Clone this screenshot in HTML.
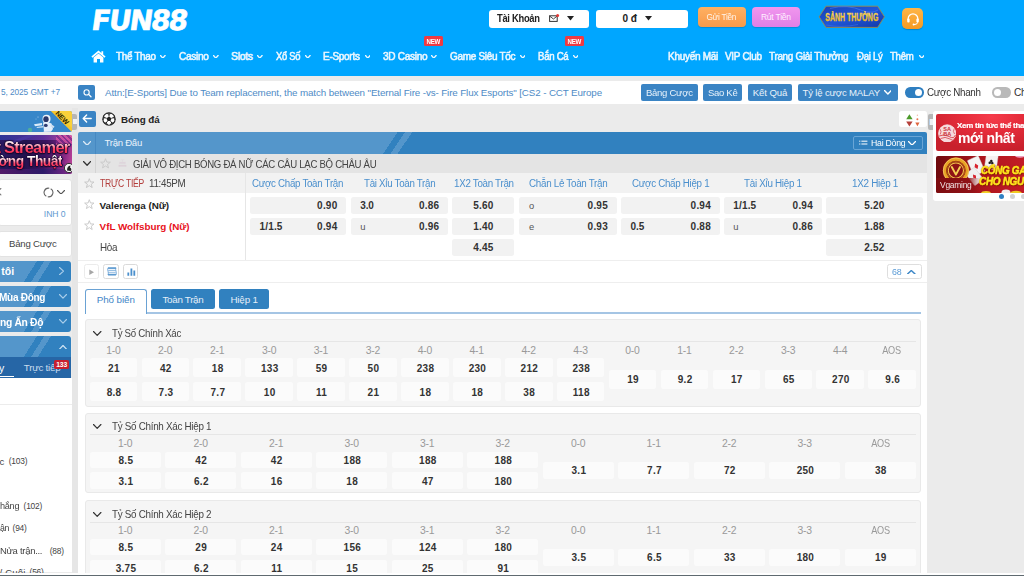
<!DOCTYPE html>
<html lang="vi">
<head>
<meta charset="utf-8">
<title>FUN88 - Bóng đá</title>
<style>
html,body{margin:0;padding:0;}
body{width:1024px;height:576px;overflow:hidden;background:#ebebeb;font-family:"Liberation Sans",sans-serif;position:relative;}
#root{position:absolute;left:0;top:0;width:1024px;height:576px;overflow:hidden;}
#root div,#root span,#root svg{position:absolute;box-sizing:border-box;}
#root span{white-space:nowrap;}
</style>
</head>
<body>
<div id="root">
<div style="left:0.00px;top:0.00px;width:1024.00px;height:76.30px;background:#00a6ff;"></div>
<span style="left:88.60px;top:1.50px;font-size:27.8px;line-height:38px;color:#fff;font-weight:700;font-family:'DejaVu Sans', 'Liberation Sans', sans-serif;letter-spacing:-1.75px;-webkit-text-stroke:0.6px #fff;transform:skewX(-8deg);transform-origin:left bottom;">FUN88</span>
<div style="left:489.00px;top:9.50px;width:100.00px;height:18.00px;background:#fff;border-radius:3px;"></div>
<span style="left:497.00px;top:11.00px;font-size:10px;line-height:15px;color:#222;font-weight:700;letter-spacing:-0.300px;transform:scaleX(0.9359);transform-origin:left center;">Tài Khoản</span>
<div style="left:596.00px;top:9.50px;width:91.50px;height:18.00px;background:#fff;border-radius:3px;"></div>
<span style="left:622.50px;top:11.00px;font-size:10px;line-height:15px;color:#222;font-weight:700;letter-spacing:0.016px;">0 đ</span>
<svg style="left:548.50px;top:14.00px;" width="11" height="9" viewBox="0 0 11 9"><rect x="0.6" y="1.8" width="7.6" height="5.6" fill="none" stroke="#333" stroke-width="1"/><path d="M0.8 2.2 L4.4 5 L8 2.2" fill="none" stroke="#333" stroke-width="0.9"/><circle cx="8.6" cy="1.6" r="1.5" fill="#e53935"/></svg>
<svg style="left:567.00px;top:16.20px;" width="7" height="5" viewBox="0 0 7 5"><path d="M0 0 H7 L3.5 4.6 Z" fill="#222"/></svg>
<svg style="left:644.50px;top:16.20px;" width="7" height="5" viewBox="0 0 7 5"><path d="M0 0 H7 L3.5 4.6 Z" fill="#222"/></svg>
<div style="left:697.50px;top:7.00px;width:48.00px;height:20.00px;background:linear-gradient(180deg,#ffb062,#f79a4a);border-radius:4px;box-shadow:0 1px 1px rgba(0,0,0,.15);"></div>
<span style="left:706.08px;top:10.70px;font-size:8.5px;line-height:13px;color:#fff4ea;letter-spacing:-0.255px;transform:scaleX(0.9728);transform-origin:15.42px center;">Gửi Tiền</span>
<div style="left:752.00px;top:7.00px;width:48.00px;height:20.00px;background:linear-gradient(180deg,#f196ee,#e07fe6);border-radius:4px;box-shadow:0 1px 1px rgba(0,0,0,.15);"></div>
<span style="left:760.90px;top:10.70px;font-size:8.5px;line-height:13px;color:#fff0ff;letter-spacing:-0.207px;">Rút Tiền</span>
<svg style="left:818.40px;top:5.00px;" width="68" height="24" viewBox="0 0 68 24"><defs><linearGradient id="gd" x1="0" y1="0" x2="0" y2="1"><stop offset="0" stop-color="#fff0a0"/><stop offset="0.5" stop-color="#f6c935"/><stop offset="1" stop-color="#e0a21c"/></linearGradient><linearGradient id="bd" x1="0" y1="0" x2="1" y2="1"><stop offset="0" stop-color="#1a3fb4"/><stop offset="0.5" stop-color="#1f56d8"/><stop offset="1" stop-color="#1238a6"/></linearGradient></defs><path d="M1.2 11.8 L8 1.2 H59.6 L66.4 11.8 L59.6 22.4 H8 Z" fill="url(#bd)" stroke="#9a8a4a" stroke-width="0.9"/><path d="M12 3.4 Q30 -1 44 5.5 Q54 9 60 5" fill="none" stroke="#3f7af0" stroke-width="1" opacity=".7"/><path d="M8 20 Q24 23 40 19.5" fill="none" stroke="#3f7af0" stroke-width="0.8" opacity=".6"/><text x="33.8" y="16.3" text-anchor="middle" font-family="Liberation Sans, sans-serif" font-weight="700" font-size="11.6" fill="url(#gd)" stroke="#f2c230" stroke-width="0.35" textLength="53" lengthAdjust="spacingAndGlyphs">SẢNH THƯỞNG</text></svg>
<div style="left:901.50px;top:7.50px;width:21.50px;height:21.50px;background:linear-gradient(180deg,#ffb648,#f59a23);border-radius:5px;box-shadow:0 1px 1px rgba(0,0,0,.2);"></div>
<svg style="left:904.50px;top:10.50px;" width="16" height="16" viewBox="0 0 16 16"><path d="M3.2 9 V7.6 A4.8 4.8 0 0 1 12.8 7.6 V9" fill="none" stroke="#fff" stroke-width="1.3"/><rect x="2.2" y="7.6" width="2.4" height="4" rx="1" fill="#fff"/><rect x="11.4" y="7.6" width="2.4" height="4" rx="1" fill="#fff"/><path d="M12.6 11.4 Q12.4 13.6 9 13.6" fill="none" stroke="#fff" stroke-width="1"/><circle cx="8.6" cy="13.6" r="1" fill="#fff"/></svg>
<svg style="left:91.00px;top:49.50px;" width="15" height="13" viewBox="0 0 15 13"><path d="M7.5 0.6 L0.4 6.6 L1.5 7.8 L7.5 2.8 L13.5 7.8 L14.6 6.6 L12.2 4.5 V1.2 H10.4 V3 Z" fill="#fff"/><path d="M2.6 7.6 L7.5 3.6 L12.4 7.6 V12.4 H9 V9 H6 V12.4 H2.6 Z" fill="#fff"/></svg>
<span style="left:115.75px;top:48.80px;font-size:10.3px;line-height:15px;color:#eaf6ff;letter-spacing:-0.309px;transform:scaleX(0.9586);transform-origin:left center;-webkit-text-stroke:0.55px #eaf6ff;">Thể Thao</span>
<svg style="left:160.30px;top:54.90px;" width="5.6" height="3.6" viewBox="0 0 5.6 3.6"><path d="M0.5 0.5 L2.8 3.1 L5.1 0.5" fill="none" stroke="#eaf6ff" stroke-width="1.4" stroke-linecap="round" stroke-linejoin="round"/></svg>
<span style="left:178.50px;top:48.80px;font-size:10.3px;line-height:15px;color:#eaf6ff;letter-spacing:-0.309px;transform:scaleX(0.9830);transform-origin:left center;-webkit-text-stroke:0.55px #eaf6ff;">Casino</span>
<svg style="left:213.00px;top:54.90px;" width="5.6" height="3.6" viewBox="0 0 5.6 3.6"><path d="M0.5 0.5 L2.8 3.1 L5.1 0.5" fill="none" stroke="#eaf6ff" stroke-width="1.4" stroke-linecap="round" stroke-linejoin="round"/></svg>
<span style="left:231.00px;top:48.80px;font-size:10.3px;line-height:15px;color:#eaf6ff;letter-spacing:-0.231px;-webkit-text-stroke:0.55px #eaf6ff;">Slots</span>
<svg style="left:257.00px;top:54.90px;" width="5.6" height="3.6" viewBox="0 0 5.6 3.6"><path d="M0.5 0.5 L2.8 3.1 L5.1 0.5" fill="none" stroke="#eaf6ff" stroke-width="1.4" stroke-linecap="round" stroke-linejoin="round"/></svg>
<span style="left:275.75px;top:48.80px;font-size:10.3px;line-height:15px;color:#eaf6ff;letter-spacing:-0.309px;transform:scaleX(0.9133);transform-origin:left center;-webkit-text-stroke:0.55px #eaf6ff;">Xổ Số</span>
<svg style="left:305.00px;top:54.90px;" width="5.6" height="3.6" viewBox="0 0 5.6 3.6"><path d="M0.5 0.5 L2.8 3.1 L5.1 0.5" fill="none" stroke="#eaf6ff" stroke-width="1.4" stroke-linecap="round" stroke-linejoin="round"/></svg>
<span style="left:323.40px;top:48.80px;font-size:10.3px;line-height:15px;color:#eaf6ff;letter-spacing:-0.309px;transform:scaleX(0.9736);transform-origin:left center;-webkit-text-stroke:0.55px #eaf6ff;">E-Sports</span>
<svg style="left:364.70px;top:54.90px;" width="5.6" height="3.6" viewBox="0 0 5.6 3.6"><path d="M0.5 0.5 L2.8 3.1 L5.1 0.5" fill="none" stroke="#eaf6ff" stroke-width="1.4" stroke-linecap="round" stroke-linejoin="round"/></svg>
<span style="left:382.80px;top:48.80px;font-size:10.3px;line-height:15px;color:#eaf6ff;letter-spacing:-0.309px;transform:scaleX(0.9801);transform-origin:left center;-webkit-text-stroke:0.55px #eaf6ff;">3D Casino</span>
<svg style="left:431.00px;top:54.90px;" width="5.6" height="3.6" viewBox="0 0 5.6 3.6"><path d="M0.5 0.5 L2.8 3.1 L5.1 0.5" fill="none" stroke="#eaf6ff" stroke-width="1.4" stroke-linecap="round" stroke-linejoin="round"/></svg>
<span style="left:450.00px;top:48.80px;font-size:10.3px;line-height:15px;color:#eaf6ff;letter-spacing:-0.309px;transform:scaleX(0.9697);transform-origin:left center;-webkit-text-stroke:0.55px #eaf6ff;">Game Siêu Tốc</span>
<svg style="left:519.70px;top:54.90px;" width="5.6" height="3.6" viewBox="0 0 5.6 3.6"><path d="M0.5 0.5 L2.8 3.1 L5.1 0.5" fill="none" stroke="#eaf6ff" stroke-width="1.4" stroke-linecap="round" stroke-linejoin="round"/></svg>
<span style="left:538.00px;top:48.80px;font-size:10.3px;line-height:15px;color:#eaf6ff;letter-spacing:-0.309px;transform:scaleX(0.9371);transform-origin:left center;-webkit-text-stroke:0.55px #eaf6ff;">Bắn Cá</span>
<svg style="left:572.80px;top:54.90px;" width="5.6" height="3.6" viewBox="0 0 5.6 3.6"><path d="M0.5 0.5 L2.8 3.1 L5.1 0.5" fill="none" stroke="#eaf6ff" stroke-width="1.4" stroke-linecap="round" stroke-linejoin="round"/></svg>
<span style="left:668.00px;top:48.80px;font-size:10.3px;line-height:15px;color:#eaf6ff;letter-spacing:-0.309px;transform:scaleX(0.9737);transform-origin:left center;-webkit-text-stroke:0.55px #eaf6ff;">Khuyến Mãi</span>
<span style="left:725.00px;top:48.80px;font-size:10.3px;line-height:15px;color:#eaf6ff;letter-spacing:-0.309px;transform:scaleX(0.9663);transform-origin:left center;-webkit-text-stroke:0.55px #eaf6ff;">VIP Club</span>
<span style="left:768.75px;top:48.80px;font-size:10.3px;line-height:15px;color:#eaf6ff;letter-spacing:-0.309px;transform:scaleX(0.9632);transform-origin:left center;-webkit-text-stroke:0.55px #eaf6ff;">Trang Giải Thưởng</span>
<span style="left:856.75px;top:48.80px;font-size:10.3px;line-height:15px;color:#eaf6ff;letter-spacing:-0.309px;transform:scaleX(0.9315);transform-origin:left center;-webkit-text-stroke:0.55px #eaf6ff;">Đại Lý</span>
<span style="left:890.00px;top:48.80px;font-size:10.3px;line-height:15px;color:#eaf6ff;letter-spacing:-0.309px;transform:scaleX(0.9350);transform-origin:left center;-webkit-text-stroke:0.55px #eaf6ff;">Thêm</span>
<svg style="left:918.50px;top:54.90px;" width="5.6" height="3.6" viewBox="0 0 5.6 3.6"><path d="M0.5 0.5 L2.8 3.1 L5.1 0.5" fill="none" stroke="#eaf6ff" stroke-width="1.4" stroke-linecap="round" stroke-linejoin="round"/></svg>
<div style="left:424.00px;top:36.30px;width:19.00px;height:10.00px;background:#ef3a42;border-radius:1.5px;"></div>
<span style="left:426.11px;top:36.50px;font-size:6.5px;line-height:10px;color:#fff;font-weight:700;letter-spacing:-0.195px;transform:scaleX(0.9471);transform-origin:7.39px center;">NEW</span>
<div style="left:565.30px;top:36.30px;width:19.00px;height:10.00px;background:#ef3a42;border-radius:1.5px;"></div>
<span style="left:567.41px;top:36.50px;font-size:6.5px;line-height:10px;color:#fff;font-weight:700;letter-spacing:-0.195px;transform:scaleX(0.9471);transform-origin:7.39px center;">NEW</span>
<div style="left:0.00px;top:81.00px;width:1024.00px;height:23.00px;background:#fff;"></div>
<span style="left:1.00px;top:86.10px;font-size:8.3px;line-height:13px;color:#4e8bc6;letter-spacing:-0.075px;">5, 2025 GMT +7</span>
<div style="left:78.40px;top:85.00px;width:16.80px;height:15.20px;background:#3a84c4;border-radius:2px;"></div>
<svg style="left:81.50px;top:87.50px;" width="11" height="11" viewBox="0 0 11 11"><circle cx="4.6" cy="4.4" r="2.6" fill="none" stroke="#fff" stroke-width="1.1"/><path d="M6.6 6.4 L9 8.8" stroke="#fff" stroke-width="1.3" stroke-linecap="round"/></svg>
<span style="left:105.00px;top:84.90px;font-size:9.8px;line-height:15px;color:#4e8bc6;letter-spacing:-0.116px;">Attn:[E-Sports] Due to Team replacement, the match between &quot;Eternal Fire -vs- Fire Flux Esports&quot; [CS2 - CCT Europe</span>
<div style="left:641.00px;top:84.20px;width:56.60px;height:16.60px;background:#3a84c4;border-radius:2px;"></div>
<span style="left:645.60px;top:85.50px;font-size:9.6px;line-height:14px;color:#e8f2fb;letter-spacing:-0.288px;transform:scaleX(0.9934);transform-origin:left center;">Bảng Cược</span>
<div style="left:703.00px;top:84.20px;width:39.30px;height:16.60px;background:#3a84c4;border-radius:2px;"></div>
<span style="left:707.80px;top:85.50px;font-size:9.6px;line-height:14px;color:#e8f2fb;letter-spacing:-0.288px;transform:scaleX(0.9885);transform-origin:left center;">Sao Kê</span>
<div style="left:748.00px;top:84.20px;width:44.00px;height:16.60px;background:#3a84c4;border-radius:2px;"></div>
<span style="left:752.80px;top:85.50px;font-size:9.6px;line-height:14px;color:#e8f2fb;letter-spacing:-0.115px;">Kết Quả</span>
<div style="left:797.60px;top:84.20px;width:100.00px;height:16.60px;background:#3a84c4;border-radius:2px;"></div>
<span style="left:802.50px;top:85.50px;font-size:9.6px;line-height:14px;color:#e8f2fb;letter-spacing:-0.172px;">Tỷ lệ cược MALAY</span>
<svg style="left:883.50px;top:90.30px;" width="7.8" height="4.6" viewBox="0 0 7.8 4.6"><path d="M0.5 0.5 L3.9 4.1 L7.3 0.5" fill="none" stroke="#fff" stroke-width="1.4" stroke-linecap="round" stroke-linejoin="round"/></svg>
<div style="left:905.00px;top:87.30px;width:19.00px;height:10.40px;background:#2f7fc1;border-radius:5.2px;"></div>
<div style="left:915.40px;top:89.00px;width:7.00px;height:7.00px;background:#fff;border-radius:3.5px;"></div>
<span style="left:927.00px;top:85.00px;font-size:10.2px;line-height:15px;color:#333;letter-spacing:-0.306px;transform:scaleX(0.9633);transform-origin:left center;">Cược Nhanh</span>
<div style="left:992.40px;top:87.30px;width:19.00px;height:10.40px;background:#b9b9b9;border-radius:5.2px;"></div>
<div style="left:993.90px;top:89.00px;width:7.00px;height:7.00px;background:#fff;border-radius:3.5px;"></div>
<span style="left:1014.00px;top:85.00px;font-size:10.2px;line-height:15px;color:#333;letter-spacing:-0.3px;">Chế độ</span>
<div style="left:71.60px;top:108.00px;width:6.00px;height:468.00px;background:#e6e6e6;"></div>
<div style="left:0.00px;top:111.30px;width:71.50px;height:20.60px;background:#3887c9;border-radius:0 2px 2px 0;overflow:hidden;"><div style="left:50.6px;top:0;width:0;height:0;border-left:21px solid transparent;border-top:0 solid transparent;border-right:0 solid #f8cf35;border-bottom:0;"></div><svg style="left:50.5px;top:0" width="21" height="21" viewBox="0 0 21 21"><path d="M0 0 H21 V21 Z" fill="#f9d13a"/><path d="M0 0 L21 21 V17 L4 0 Z" fill="#f3bf22" opacity=".6"/></svg><span style="left:54.2px;top:2.4px;font-size:6.9px;font-weight:700;color:#2b2300;transform:rotate(45deg);line-height:8px;letter-spacing:-0.1px;">NEW</span><svg style="left:26px;top:1px" width="32" height="20" viewBox="0 0 32 20"><circle cx="4" cy="18" r="2.2" fill="#4fae9c"/><circle cx="12" cy="5" r="0.5" fill="#cfe4f7"/><circle cx="10" cy="7" r="0.4" fill="#cfe4f7"/><circle cx="-8" cy="16" r="0.6" fill="#cfe4f7"/><path d="M8 12.2 L16 11 L16 13.2 L9 14.2 Z" fill="#dcebf9"/><path d="M10.5 15 L17 14 L17 15.4 L11 16 Z" fill="#c6dcf2"/><ellipse cx="20.5" cy="7" rx="4" ry="4.2" fill="#eef4fb"/><ellipse cx="20" cy="7.2" rx="2.7" ry="2.9" fill="#2b3769"/><path d="M17 10.5 Q21 9.5 25.5 11.5 L27 17 L25 19.8 L18 19.8 L17.5 15 Z" fill="#e4eefa"/><ellipse cx="19.8" cy="13.4" rx="1.9" ry="1.7" fill="#2f3b70"/><path d="M25 12 L28.5 14.5 L27.5 16 L24.5 14.5 Z" fill="#cfdff1"/><path d="M19 19 L17 20 H23 Z" fill="#d5e4f5"/></svg></div>
<div style="left:71.60px;top:113.80px;width:5.00px;height:16.00px;background:#b6b6b6;border-radius:0 2px 2px 0;"></div>
<div style="left:73.00px;top:119.20px;width:3.60px;height:5.20px;background:#eef1f4;"></div>
<div style="left:0.00px;top:135.00px;width:71.50px;height:38.70px;background:linear-gradient(98deg,#2b1a63 0%,#23124e 35%,#3a1560 62%,#8a2a86 88%,#c5479c 100%);border-radius:0 2px 2px 0;overflow:hidden;"><div style="left:0;top:0;width:72px;height:5px;background:linear-gradient(90deg,#2e3fa8,#6a3ab0 60%,#d04fa0);opacity:.75;"></div><div style="left:8px;top:2px;width:30px;height:3px;background:#4b3aa6;transform:rotate(-20deg);opacity:.7;"></div><div style="left:0;top:34px;width:72px;height:5px;background:linear-gradient(90deg,#5a1a6a,#2a1a6a 60%,#7a2a8a);opacity:.85;"></div><div style="left:56px;top:0;width:16px;height:10px;background:repeating-linear-gradient(45deg,#e05aa8 0 2px,#7a2a8a 2px 4px);opacity:.65;"></div><span style="left:-4.6px;top:3.0px;font-size:16.4px;font-weight:700;color:#1a0a30;line-height:18px;letter-spacing:-0.7px;-webkit-text-stroke:0.5px #1a0a30;text-shadow:0 1px 1px #14062a,0 0 2px #14062a;">t Streamer</span><span style="left:-4.6px;top:3.0px;font-size:16.4px;font-weight:700;line-height:18px;letter-spacing:-0.7px;background:linear-gradient(180deg,#ffffff 16%,#ffc2cf 36%,#ff4468 58%,#ee2249 100%);-webkit-background-clip:text;background-clip:text;color:transparent;">t Streamer</span><span style="left:-11px;top:19.4px;font-size:13.8px;font-weight:700;color:#1a0a30;line-height:16px;letter-spacing:-0.5px;-webkit-text-stroke:0.4px #1a0a30;text-shadow:0 1px 1px #14062a,0 0 2px #14062a;">Đờng Thuật</span><span style="left:-11px;top:19.4px;font-size:13.8px;font-weight:700;line-height:16px;letter-spacing:-0.5px;background:linear-gradient(180deg,#ffffff 16%,#ffc2cf 36%,#ff4468 58%,#ee2249 100%);-webkit-background-clip:text;background-clip:text;color:transparent;">Đờng Thuật</span><svg style="left:63.6px;top:27px" width="10" height="12" viewBox="0 0 10 12"><circle cx="5" cy="6" r="4.6" fill="#f4f4f4" stroke="#222" stroke-width="0.9"/><path d="M3 8.5 Q3 4 6.5 3.4 L6 5.5 Q8 6.5 7 9 Z" fill="#222"/></svg></div>
<div style="left:-2.00px;top:178.60px;width:74.00px;height:47.80px;background:#fff;border-radius:3px;border:1px solid #e2e2e2;"></div>
<div style="left:0.00px;top:204.00px;width:71.00px;height:1.00px;background:#e4e4e4;"></div>
<svg style="left:-2.60px;top:188.20px;" width="4.4" height="7.4" viewBox="0 0 4.4 7.4"><path d="M3.9000000000000004 0.5 L0.5 3.7 L3.9000000000000004 6.9" fill="none" stroke="#777" stroke-width="1.1" stroke-linecap="round" stroke-linejoin="round"/></svg>
<svg style="left:43.00px;top:186.80px;" width="11" height="11" viewBox="0 0 11 11"><path d="M3.3 9.31 A4.4 4.4 0 0 1 6.26 1.17" fill="none" stroke="#666" stroke-width="1.1"/><path d="M7.7 1.69 A4.4 4.4 0 0 1 4.74 9.83" fill="none" stroke="#666" stroke-width="1.1"/></svg>
<svg style="left:57.30px;top:189.80px;" width="8" height="4.6" viewBox="0 0 8 4.6"><path d="M0.5 0.5 L4.0 4.1 L7.5 0.5" fill="none" stroke="#555" stroke-width="1.1" stroke-linecap="round" stroke-linejoin="round"/></svg>
<span style="left:43.85px;top:208.10px;font-size:8.6px;line-height:13px;color:#5e98cf;letter-spacing:-0.054px;">INH 0</span>
<div style="left:-2.00px;top:231.20px;width:74.00px;height:25.40px;background:#fff;border-radius:3px;border:1px solid #e2e2e2;"></div>
<span style="left:9.00px;top:237.20px;font-size:9.6px;line-height:14px;color:#444;letter-spacing:-0.224px;">Bảng Cược</span>
<div style="left:0.00px;top:260.70px;width:71.30px;height:21.00px;background:linear-gradient(122.3deg,#5496cb 0,#5496cb 31.3px,#3181bf 31.3px,#3181bf 37.4px,#5496cb 37.4px,#5496cb 43.1px,#3181bf 43.1px);border-radius:0 3px 3px 0;"></div>
<span style="left:1.30px;top:263.40px;font-size:10.5px;line-height:16px;color:#fff;font-weight:700;letter-spacing:0.057px;">tôi</span>
<svg style="left:58.80px;top:267.00px;" width="5" height="8.2" viewBox="0 0 5 8.2"><path d="M0.5 0.5 L4.5 4.1 L0.5 7.699999999999999" fill="none" stroke="#a9cdea" stroke-width="1.2" stroke-linecap="round" stroke-linejoin="round"/></svg>
<div style="left:0.00px;top:285.90px;width:71.30px;height:21.00px;background:linear-gradient(122.3deg,#5496cb 0,#5496cb 31.3px,#3181bf 31.3px,#3181bf 37.4px,#5496cb 37.4px,#5496cb 43.1px,#3181bf 43.1px);border-radius:0 3px 3px 0;"></div>
<span style="left:-1.00px;top:288.60px;font-size:10.5px;line-height:16px;color:#fff;font-weight:700;letter-spacing:-0.315px;transform:scaleX(0.9579);transform-origin:left center;">Mùa Đông</span>
<svg style="left:58.60px;top:294.30px;" width="8" height="4.6" viewBox="0 0 8 4.6"><path d="M0.5 0.5 L4.0 4.1 L7.5 0.5" fill="none" stroke="#a9cdea" stroke-width="1.2" stroke-linecap="round" stroke-linejoin="round"/></svg>
<div style="left:0.00px;top:311.20px;width:71.30px;height:20.80px;background:linear-gradient(122.3deg,#5496cb 0,#5496cb 31.3px,#3181bf 31.3px,#3181bf 37.4px,#5496cb 37.4px,#5496cb 43.1px,#3181bf 43.1px);border-radius:0 3px 3px 0;"></div>
<span style="left:-0.50px;top:313.80px;font-size:10.5px;line-height:16px;color:#fff;font-weight:700;letter-spacing:-0.315px;transform:scaleX(0.9786);transform-origin:left center;">ng Ấn Độ</span>
<svg style="left:58.60px;top:319.40px;" width="8" height="4.6" viewBox="0 0 8 4.6"><path d="M0.5 0.5 L4.0 4.1 L7.5 0.5" fill="none" stroke="#a9cdea" stroke-width="1.2" stroke-linecap="round" stroke-linejoin="round"/></svg>
<div style="left:0.00px;top:336.20px;width:71.30px;height:21.40px;background:linear-gradient(122.3deg,#5496cb 0,#5496cb 31.3px,#3181bf 31.3px,#3181bf 37.4px,#5496cb 37.4px,#5496cb 43.1px,#3181bf 43.1px);border-radius:0 3px 0 0;"></div>
<svg style="left:58.60px;top:344.70px;" width="8" height="4.6" viewBox="0 0 8 4.6"><path d="M0.5 4.1 L4.0 0.5 L7.5 4.1" fill="none" stroke="#cfe3f4" stroke-width="1.2" stroke-linecap="round" stroke-linejoin="round"/></svg>
<div style="left:0.00px;top:357.40px;width:71.30px;height:21.00px;background:#2666a6;"></div>
<span style="left:-1.00px;top:359.60px;font-size:10.5px;line-height:16px;color:#fff;">y</span>
<div style="left:0.00px;top:376.00px;width:14.00px;height:1.20px;background:#fff;"></div>
<span style="left:23.80px;top:360.30px;font-size:9.8px;line-height:15px;color:#c8dcef;letter-spacing:-0.251px;">Trực tiếp</span>
<div style="left:54.30px;top:359.90px;width:14.80px;height:8.80px;background:#c8202f;border-radius:1.5px;"></div>
<span style="left:56.14px;top:358.90px;font-size:6.8px;line-height:11px;color:#fff;font-weight:700;letter-spacing:-0.115px;">133</span>
<div style="left:0.00px;top:378.40px;width:71.60px;height:194.00px;background:#fff;"></div>
<div style="left:0.00px;top:403.60px;width:71.60px;height:1.00px;background:#ececec;"></div>
<span style="left:-0.50px;top:454.60px;font-size:9.6px;line-height:14px;color:#444;">c</span>
<span style="left:8.80px;top:455.30px;font-size:8.4px;line-height:13px;color:#444;letter-spacing:-0.233px;">(103)</span>
<span style="left:-0.50px;top:499.10px;font-size:9.6px;line-height:14px;color:#444;letter-spacing:-0.288px;transform:scaleX(0.9522);transform-origin:left center;">hắng</span>
<span style="left:23.60px;top:499.70px;font-size:8.4px;line-height:13px;color:#444;letter-spacing:-0.233px;">(102)</span>
<span style="left:-0.50px;top:521.40px;font-size:9.6px;line-height:14px;color:#444;letter-spacing:-0.288px;transform:scaleX(0.9149);transform-origin:left center;">ận</span>
<span style="left:12.60px;top:522.10px;font-size:8.4px;line-height:13px;color:#444;letter-spacing:-0.227px;">(94)</span>
<span style="left:-0.50px;top:544.00px;font-size:9.6px;line-height:14px;color:#444;letter-spacing:-0.288px;transform:scaleX(0.9881);transform-origin:left center;">Nửa trận...</span>
<span style="left:49.80px;top:544.70px;font-size:8.4px;line-height:13px;color:#444;letter-spacing:-0.227px;">(88)</span>
<span style="left:-0.50px;top:565.60px;font-size:9.6px;line-height:14px;color:#444;letter-spacing:0.156px;">/ Cuối</span>
<span style="left:29.60px;top:566.30px;font-size:8.4px;line-height:13px;color:#444;letter-spacing:-0.227px;">(56)</span>
<div style="left:78.80px;top:110.80px;width:17.00px;height:16.20px;background:#3a84c4;border-radius:2px;"></div>
<svg style="left:82.30px;top:114.40px;" width="10" height="9" viewBox="0 0 10 9"><path d="M9.2 4.5 H1.4 M4.6 1 L1.2 4.5 L4.6 8" fill="none" stroke="#fff" stroke-width="1.4" stroke-linecap="round" stroke-linejoin="round"/></svg>
<svg style="left:102.00px;top:112.40px;" width="14" height="14" viewBox="0 0 14 14"><circle cx="7" cy="7" r="6.2" fill="#fff" stroke="#222" stroke-width="1.1"/><polygon points="7,4.4 9.5,6.2 8.5,9.1 5.5,9.1 4.5,6.2" fill="#222"/><path d="M7 0.9 L7 4.4 M12.9 5.3 L9.5 6.2 M10.6 12 L8.5 9.1 M3.4 12 L5.5 9.1 M1.1 5.3 L4.5 6.2" stroke="#222" stroke-width="1"/><path d="M4.9 1.4 L7 2.2 L9.1 1.4 M12.4 3.6 L12 6 L13.2 8 M11.8 10.7 L9.6 11 L8.2 13 M5.8 13 L4.4 11 L2.2 10.7 M0.8 8 L2 6 L1.6 3.6" fill="none" stroke="#222" stroke-width="0.9"/></svg>
<span style="left:121.00px;top:111.50px;font-size:9.8px;line-height:15px;color:#222;font-weight:700;letter-spacing:-0.098px;">Bóng đá</span>
<div style="left:899.00px;top:111.20px;width:28.20px;height:15.70px;background:#fff;border-radius:2.5px;"></div>
<svg style="left:905.50px;top:113.60px;" width="7" height="13" viewBox="0 0 7 13"><path d="M3.4 0.2 L6.6 5.2 H0.2 Z" fill="#4c9a2a"/><path d="M0.2 7.6 H6.6 L3.4 12.4 Z" fill="#b5403a"/></svg>
<svg style="left:915.00px;top:113.60px;" width="5" height="13" viewBox="0 0 5 13"><circle cx="2.4" cy="1.2" r="0.7" fill="#f2b8a8"/><circle cx="2.4" cy="5.3" r="1" fill="#e8734f"/><path d="M0.3 8.4 H4.5 L2.4 12.2 Z" fill="#e0643c"/></svg>
<div style="left:928.10px;top:113.70px;width:5.00px;height:16.10px;background:#b6b6b6;border-radius:2px 0 0 2px;"></div>
<div style="left:929.30px;top:119.30px;width:3.80px;height:5.80px;background:#eef1f4;border-left:0.6px solid #b4cde6;"></div>
<div style="left:78.40px;top:132.00px;width:848.80px;height:22.00px;background:linear-gradient(124.3deg,#5496cb 0,#5496cb 264.2px,#3181bf 264.2px,#3181bf 270.3px,#5496cb 270.3px,#5496cb 276.2px,#3181bf 276.2px);border-radius:2px 2px 0 0;"></div>
<div style="left:94.60px;top:132.00px;width:0.80px;height:22.00px;background:rgba(40,110,175,.3);"></div>
<svg style="left:82.70px;top:140.60px;" width="8.2" height="4.8" viewBox="0 0 8.2 4.8"><path d="M0.5 0.5 L4.1 4.3 L7.699999999999999 0.5" fill="none" stroke="#dbe9f5" stroke-width="1.3" stroke-linecap="round" stroke-linejoin="round"/></svg>
<span style="left:104.50px;top:136.20px;font-size:9.6px;line-height:14px;color:#eaf3fb;letter-spacing:-0.268px;">Trận Đấu</span>
<div style="left:853.10px;top:136.00px;width:69.50px;height:13.70px;border-radius:2px;border:1px solid #69a5d6;"></div>
<svg style="left:858.60px;top:139.40px;" width="9" height="7" viewBox="0 0 9 7"><path d="M2.4 2.2 H8.4 M2.4 5 H8.4" stroke="#fff" stroke-width="1"/><path d="M0.2 2.2 H1.3 M0.2 5 H1.3" stroke="#fff" stroke-width="1"/></svg>
<span style="left:870.60px;top:136.00px;font-size:9px;line-height:14px;color:#fff;letter-spacing:-0.270px;transform:scaleX(0.9708);transform-origin:left center;">Hai Dòng</span>
<svg style="left:908.00px;top:140.80px;" width="8" height="4.6" viewBox="0 0 8 4.6"><path d="M0.5 0.5 L4.0 4.1 L7.5 0.5" fill="none" stroke="#fff" stroke-width="1.3" stroke-linecap="round" stroke-linejoin="round"/></svg>
<div style="left:78.40px;top:154.00px;width:848.80px;height:19.20px;background:#e4e4e4;"></div>
<div style="left:94.60px;top:154.00px;width:0.80px;height:19.20px;background:#d4d4d4;"></div>
<svg style="left:82.70px;top:161.20px;" width="8.2" height="4.8" viewBox="0 0 8.2 4.8"><path d="M0.5 0.5 L4.1 4.3 L7.699999999999999 0.5" fill="none" stroke="#333" stroke-width="1.3" stroke-linecap="round" stroke-linejoin="round"/></svg>
<svg style="left:100.20px;top:158.40px;" width="11" height="11" viewBox="0 0 11 11"><polygon points="5.50,0.70 6.76,4.07 10.35,4.22 7.54,6.46 8.50,9.93 5.50,7.94 2.50,9.93 3.46,6.46 0.65,4.22 4.24,4.07" fill="none" stroke="#c8c8c8" stroke-width="0.9" stroke-linejoin="round"/></svg>
<svg style="left:118.00px;top:158.80px;" width="9" height="9" viewBox="0 0 9 9"><path d="M2.6 0.8 H6.4 M4.5 0.8 V3 M1.6 3.2 H7.4 V4.6 H1.6 Z M0.8 6 H8.2 V7.6 H0.8 Z" fill="#dccfd8" stroke="#dccfd8" stroke-width="0.4" opacity=".85"/></svg>
<span style="left:133.00px;top:156.90px;font-size:10.3px;line-height:15px;color:#444;letter-spacing:-0.309px;transform:scaleX(0.9339);transform-origin:left center;">GIẢI VÔ ĐỊCH BÓNG ĐÁ NỮ CÁC CÂU LẠC BỘ CHÂU ÂU</span>
<div style="left:78.40px;top:173.20px;width:848.80px;height:402.80px;background:#fff;"></div>
<div style="left:78.40px;top:173.20px;width:848.80px;height:19.50px;background:#f2f2f2;"></div>
<div style="left:245.30px;top:173.20px;width:0.80px;height:87.00px;background:#e6e6e6;"></div>
<svg style="left:83.60px;top:177.80px;" width="10.6" height="10.6" viewBox="0 0 10.6 10.6"><polygon points="5.30,0.70 6.51,3.94 9.96,4.09 7.26,6.24 8.18,9.56 5.30,7.66 2.42,9.56 3.34,6.24 0.64,4.09 4.09,3.94" fill="none" stroke="#c4c4c4" stroke-width="0.9" stroke-linejoin="round"/></svg>
<span style="left:99.80px;top:175.50px;font-size:10.2px;line-height:15px;color:#b23c3a;letter-spacing:-0.306px;transform:scaleX(0.8421);transform-origin:left center;">TRỰC TIẾP</span>
<span style="left:149.00px;top:175.50px;font-size:10.2px;line-height:15px;color:#444;letter-spacing:-0.306px;transform:scaleX(0.9635);transform-origin:left center;">11:45PM</span>
<span style="left:252.30px;top:175.50px;font-size:10.0px;line-height:15px;color:#4a8fcd;letter-spacing:-0.300px;transform:scaleX(0.9741);transform-origin:left center;">Cược Chấp Toàn Trận</span>
<span style="left:363.70px;top:175.50px;font-size:10.0px;line-height:15px;color:#4a8fcd;letter-spacing:-0.300px;transform:scaleX(0.9754);transform-origin:left center;">Tài Xỉu Toàn Trận</span>
<span style="left:454.00px;top:175.50px;font-size:10.0px;line-height:15px;color:#4a8fcd;letter-spacing:-0.300px;transform:scaleX(0.9792);transform-origin:left center;">1X2 Toàn Trận</span>
<span style="left:529.00px;top:175.50px;font-size:10.0px;line-height:15px;color:#4a8fcd;letter-spacing:-0.300px;transform:scaleX(0.9826);transform-origin:left center;">Chẵn Lẻ Toàn Trận</span>
<span style="left:631.70px;top:175.50px;font-size:10.0px;line-height:15px;color:#4a8fcd;letter-spacing:-0.300px;transform:scaleX(0.9780);transform-origin:left center;">Cược Chấp Hiệp 1</span>
<span style="left:744.00px;top:175.50px;font-size:10.0px;line-height:15px;color:#4a8fcd;letter-spacing:-0.300px;transform:scaleX(0.9845);transform-origin:left center;">Tài Xỉu Hiệp 1</span>
<span style="left:852.00px;top:175.50px;font-size:10.0px;line-height:15px;color:#4a8fcd;letter-spacing:-0.300px;transform:scaleX(0.9896);transform-origin:left center;">1X2 Hiệp 1</span>
<div style="left:250.00px;top:196.80px;width:96.20px;height:16.80px;background:#f2f2f2;border-radius:2.5px;"></div>
<span style="left:317.11px;top:197.90px;font-size:10px;line-height:15px;color:#333;font-weight:700;letter-spacing:0.208px;">0.90</span>
<div style="left:250.00px;top:218.00px;width:96.20px;height:16.60px;background:#f2f2f2;border-radius:2.5px;"></div>
<span style="left:259.60px;top:219.00px;font-size:10px;line-height:15px;color:#333;font-weight:700;letter-spacing:0.150px;">1/1.5</span>
<span style="left:317.11px;top:219.00px;font-size:10px;line-height:15px;color:#333;font-weight:700;letter-spacing:0.208px;">0.94</span>
<div style="left:350.70px;top:196.80px;width:97.30px;height:16.80px;background:#f2f2f2;border-radius:2.5px;"></div>
<span style="left:360.30px;top:197.90px;font-size:10px;line-height:15px;color:#333;font-weight:700;letter-spacing:-0.135px;">3.0</span>
<span style="left:418.91px;top:197.90px;font-size:10px;line-height:15px;color:#333;font-weight:700;letter-spacing:0.208px;">0.86</span>
<div style="left:350.70px;top:218.00px;width:97.30px;height:16.60px;background:#f2f2f2;border-radius:2.5px;"></div>
<span style="left:360.30px;top:219.80px;font-size:9.4px;line-height:14px;color:#555;">u</span>
<span style="left:418.91px;top:219.00px;font-size:10px;line-height:15px;color:#333;font-weight:700;letter-spacing:0.208px;">0.96</span>
<div style="left:452.30px;top:196.80px;width:62.10px;height:16.80px;background:#f2f2f2;border-radius:2.5px;"></div>
<span style="left:473.30px;top:197.90px;font-size:10px;line-height:15px;color:#333;font-weight:700;letter-spacing:0.208px;">5.60</span>
<div style="left:452.30px;top:218.00px;width:62.10px;height:16.60px;background:#f2f2f2;border-radius:2.5px;"></div>
<span style="left:473.30px;top:219.00px;font-size:10px;line-height:15px;color:#333;font-weight:700;letter-spacing:0.208px;">1.40</span>
<div style="left:452.30px;top:239.00px;width:62.10px;height:16.70px;background:#f2f2f2;border-radius:2.5px;"></div>
<span style="left:473.30px;top:240.05px;font-size:10px;line-height:15px;color:#333;font-weight:700;letter-spacing:0.208px;">4.45</span>
<div style="left:519.30px;top:196.80px;width:97.40px;height:16.80px;background:#f2f2f2;border-radius:2.5px;"></div>
<span style="left:528.90px;top:198.70px;font-size:9.4px;line-height:14px;color:#555;">o</span>
<span style="left:587.61px;top:197.90px;font-size:10px;line-height:15px;color:#333;font-weight:700;letter-spacing:0.208px;">0.95</span>
<div style="left:519.30px;top:218.00px;width:97.40px;height:16.60px;background:#f2f2f2;border-radius:2.5px;"></div>
<span style="left:528.90px;top:219.80px;font-size:9.4px;line-height:14px;color:#555;">e</span>
<span style="left:587.61px;top:219.00px;font-size:10px;line-height:15px;color:#333;font-weight:700;letter-spacing:0.208px;">0.93</span>
<div style="left:621.00px;top:196.80px;width:98.70px;height:16.80px;background:#f2f2f2;border-radius:2.5px;"></div>
<span style="left:690.61px;top:197.90px;font-size:10px;line-height:15px;color:#333;font-weight:700;letter-spacing:0.208px;">0.94</span>
<div style="left:621.00px;top:218.00px;width:98.70px;height:16.60px;background:#f2f2f2;border-radius:2.5px;"></div>
<span style="left:630.60px;top:219.00px;font-size:10px;line-height:15px;color:#333;font-weight:700;letter-spacing:-0.135px;">0.5</span>
<span style="left:690.61px;top:219.00px;font-size:10px;line-height:15px;color:#333;font-weight:700;letter-spacing:0.208px;">0.88</span>
<div style="left:723.70px;top:196.80px;width:98.00px;height:16.80px;background:#f2f2f2;border-radius:2.5px;"></div>
<span style="left:733.30px;top:197.90px;font-size:10px;line-height:15px;color:#333;font-weight:700;letter-spacing:0.150px;">1/1.5</span>
<span style="left:792.61px;top:197.90px;font-size:10px;line-height:15px;color:#333;font-weight:700;letter-spacing:0.208px;">0.94</span>
<div style="left:723.70px;top:218.00px;width:98.00px;height:16.60px;background:#f2f2f2;border-radius:2.5px;"></div>
<span style="left:733.30px;top:219.80px;font-size:9.4px;line-height:14px;color:#555;">u</span>
<span style="left:792.61px;top:219.00px;font-size:10px;line-height:15px;color:#333;font-weight:700;letter-spacing:0.208px;">0.86</span>
<div style="left:825.80px;top:196.80px;width:97.20px;height:16.80px;background:#f2f2f2;border-radius:2.5px;"></div>
<span style="left:864.35px;top:197.90px;font-size:10px;line-height:15px;color:#333;font-weight:700;letter-spacing:0.208px;">5.20</span>
<div style="left:825.80px;top:218.00px;width:97.20px;height:16.60px;background:#f2f2f2;border-radius:2.5px;"></div>
<span style="left:864.35px;top:219.00px;font-size:10px;line-height:15px;color:#333;font-weight:700;letter-spacing:0.208px;">1.88</span>
<div style="left:825.80px;top:239.00px;width:97.20px;height:16.70px;background:#f2f2f2;border-radius:2.5px;"></div>
<span style="left:864.35px;top:240.05px;font-size:10px;line-height:15px;color:#333;font-weight:700;letter-spacing:0.208px;">2.52</span>
<svg style="left:83.60px;top:199.20px;" width="10.6" height="10.6" viewBox="0 0 10.6 10.6"><polygon points="5.30,0.70 6.51,3.94 9.96,4.09 7.26,6.24 8.18,9.56 5.30,7.66 2.42,9.56 3.34,6.24 0.64,4.09 4.09,3.94" fill="none" stroke="#c6c6c6" stroke-width="0.9" stroke-linejoin="round"/></svg>
<span style="left:99.60px;top:197.90px;font-size:9.9px;line-height:15px;color:#222;font-weight:700;letter-spacing:-0.055px;">Valerenga (Nữ)</span>
<svg style="left:83.60px;top:220.20px;" width="10.6" height="10.6" viewBox="0 0 10.6 10.6"><polygon points="5.30,0.70 6.51,3.94 9.96,4.09 7.26,6.24 8.18,9.56 5.30,7.66 2.42,9.56 3.34,6.24 0.64,4.09 4.09,3.94" fill="none" stroke="#c6c6c6" stroke-width="0.9" stroke-linejoin="round"/></svg>
<span style="left:99.60px;top:218.90px;font-size:9.9px;line-height:15px;color:#e8121c;font-weight:700;letter-spacing:-0.040px;">VfL Wolfsburg (Nữ)</span>
<span style="left:99.60px;top:239.90px;font-size:10.2px;line-height:15px;color:#444;letter-spacing:-0.306px;transform:scaleX(0.9673);transform-origin:left center;">Hòa</span>
<div style="left:78.40px;top:260.00px;width:848.80px;height:1.00px;background:#eeeeee;"></div>
<div style="left:78.40px;top:282.00px;width:848.80px;height:1.00px;background:#eeeeee;"></div>
<div style="left:84.20px;top:264.30px;width:15.00px;height:15.20px;background:#fff;border-radius:2.5px;border:1px solid #ebebeb;"></div>
<svg style="left:89.00px;top:268.60px;" width="6" height="7" viewBox="0 0 6 7"><path d="M0.3 0.4 L5 3.2 L0.3 6 Z" fill="#a6a6a6"/></svg>
<div style="left:103.40px;top:264.30px;width:15.40px;height:15.20px;background:#fff;border-radius:2.5px;border:1px solid #dadada;"></div>
<svg style="left:106.80px;top:267.40px;" width="10" height="9" viewBox="0 0 10 9"><path d="M1 0.8 Q0.3 2.4 1 4.2 Q1.7 6.2 1 8 H9 Q9.7 6.2 9 4.2 Q8.3 2.4 9 0.8 Z" fill="#eef4fb" stroke="#4a8fcd" stroke-width="0.7"/><path d="M1.2 1.2 H8.8" stroke="#3b86c6" stroke-width="1"/><path d="M1.4 3.5 H8.6 M1.4 5.7 H8.6" stroke="#5c9ad2" stroke-width="0.6"/><path d="M1.2 7.7 H8.8" stroke="#3b86c6" stroke-width="0.9"/></svg>
<div style="left:123.00px;top:264.30px;width:15.40px;height:15.20px;background:#fff;border-radius:2.5px;border:1px solid #dadada;"></div>
<svg style="left:126.80px;top:267.60px;" width="9" height="8.4" viewBox="0 0 9 8.4"><path d="M1.3 7.8 V4.4 M4.4 7.8 V0.6 M7.3 7.8 V2.4" stroke="#4a8fcd" stroke-width="1.8"/></svg>
<div style="left:886.60px;top:264.10px;width:35.00px;height:15.40px;background:#fff;border-radius:2.5px;border:1px solid #dedede;"></div>
<span style="left:892.00px;top:265.00px;font-size:9.4px;line-height:14px;color:#5b9bd5;letter-spacing:-0.282px;transform:scaleX(0.9453);transform-origin:left center;">68</span>
<svg style="left:907.00px;top:269.60px;" width="8.6" height="4.6" viewBox="0 0 8.6 4.6"><path d="M0.5 4.1 L4.3 0.5 L8.1 4.1" fill="none" stroke="#3b86c6" stroke-width="1.4" stroke-linecap="round" stroke-linejoin="round"/></svg>
<div style="left:146.40px;top:312.00px;width:774.60px;height:1.60px;background:#a5c5e4;"></div>
<div style="left:84.80px;top:289.00px;width:62.00px;height:24.60px;background:#fff;border:1px solid #6aa2d4;border-bottom:none;border-radius:3px 3px 0 0;"></div>
<span style="left:96.76px;top:292.00px;font-size:9.8px;line-height:15px;color:#3f86c7;letter-spacing:-0.086px;">Phổ biến</span>
<div style="left:151.20px;top:289.20px;width:63.80px;height:19.50px;background:#3181bf;border-radius:2.5px;"></div>
<span style="left:162.46px;top:291.90px;font-size:9.8px;line-height:15px;color:#e4eef8;letter-spacing:-0.286px;">Toàn Trận</span>
<div style="left:219.00px;top:289.20px;width:50.40px;height:19.50px;background:#3181bf;border-radius:2.5px;"></div>
<span style="left:230.38px;top:291.90px;font-size:9.8px;line-height:15px;color:#e4eef8;letter-spacing:-0.138px;">Hiệp 1</span>
<div style="left:85.40px;top:319.40px;width:835.60px;height:87.20px;background:#f5f5f5;border-radius:3px;border:1px solid #e9e9e9;"></div>
<svg style="left:93.40px;top:330.80px;" width="8.4" height="4.8" viewBox="0 0 8.4 4.8"><path d="M0.5 0.5 L4.2 4.3 L7.9 0.5" fill="none" stroke="#333" stroke-width="1.2" stroke-linecap="round" stroke-linejoin="round"/></svg>
<span style="left:112.00px;top:325.70px;font-size:10.3px;line-height:15px;color:#444;letter-spacing:-0.309px;transform:scaleX(0.9426);transform-origin:left center;">Tỷ Số Chính Xác</span>
<div style="left:89.60px;top:341.00px;width:826.00px;height:1.00px;background:#e6e6e6;"></div>
<span style="left:106.15px;top:342.60px;font-size:10.4px;line-height:16px;color:#999;letter-spacing:-0.210px;">1-0</span>
<div style="left:89.65px;top:358.30px;width:47.61px;height:18.40px;background:#fbfbfb;border-radius:2.5px;"></div>
<span style="left:108.04px;top:360.80px;font-size:10px;line-height:15px;color:#333;font-weight:700;letter-spacing:0.3px;">21</span>
<div style="left:89.65px;top:382.30px;width:47.61px;height:18.40px;background:#fbfbfb;border-radius:2.5px;"></div>
<span style="left:106.65px;top:384.80px;font-size:10px;line-height:15px;color:#333;font-weight:700;letter-spacing:0.3px;">8.8</span>
<span style="left:158.06px;top:342.60px;font-size:10.4px;line-height:16px;color:#999;letter-spacing:-0.210px;">2-0</span>
<div style="left:141.56px;top:358.30px;width:47.61px;height:18.40px;background:#fbfbfb;border-radius:2.5px;"></div>
<span style="left:159.96px;top:360.80px;font-size:10px;line-height:15px;color:#333;font-weight:700;letter-spacing:0.3px;">42</span>
<div style="left:141.56px;top:382.30px;width:47.61px;height:18.40px;background:#fbfbfb;border-radius:2.5px;"></div>
<span style="left:158.57px;top:384.80px;font-size:10px;line-height:15px;color:#333;font-weight:700;letter-spacing:0.3px;">7.3</span>
<span style="left:209.98px;top:342.60px;font-size:10.4px;line-height:16px;color:#999;letter-spacing:-0.210px;">2-1</span>
<div style="left:193.47px;top:358.30px;width:47.61px;height:18.40px;background:#fbfbfb;border-radius:2.5px;"></div>
<span style="left:211.87px;top:360.80px;font-size:10px;line-height:15px;color:#333;font-weight:700;letter-spacing:0.3px;">18</span>
<div style="left:193.47px;top:382.30px;width:47.61px;height:18.40px;background:#fbfbfb;border-radius:2.5px;"></div>
<span style="left:210.48px;top:384.80px;font-size:10px;line-height:15px;color:#333;font-weight:700;letter-spacing:0.3px;">7.7</span>
<span style="left:261.89px;top:342.60px;font-size:10.4px;line-height:16px;color:#999;letter-spacing:-0.210px;">3-0</span>
<div style="left:245.39px;top:358.30px;width:47.61px;height:18.40px;background:#fbfbfb;border-radius:2.5px;"></div>
<span style="left:261.00px;top:360.80px;font-size:10px;line-height:15px;color:#333;font-weight:700;letter-spacing:0.3px;">133</span>
<div style="left:245.39px;top:382.30px;width:47.61px;height:18.40px;background:#fbfbfb;border-radius:2.5px;"></div>
<span style="left:263.78px;top:384.80px;font-size:10px;line-height:15px;color:#333;font-weight:700;letter-spacing:0.3px;">10</span>
<span style="left:313.80px;top:342.60px;font-size:10.4px;line-height:16px;color:#999;letter-spacing:-0.210px;">3-1</span>
<div style="left:297.30px;top:358.30px;width:47.61px;height:18.40px;background:#fbfbfb;border-radius:2.5px;"></div>
<span style="left:315.69px;top:360.80px;font-size:10px;line-height:15px;color:#333;font-weight:700;letter-spacing:0.3px;">59</span>
<div style="left:297.30px;top:382.30px;width:47.61px;height:18.40px;background:#fbfbfb;border-radius:2.5px;"></div>
<span style="left:315.97px;top:384.80px;font-size:10px;line-height:15px;color:#333;font-weight:700;letter-spacing:0.3px;">11</span>
<span style="left:365.71px;top:342.60px;font-size:10.4px;line-height:16px;color:#999;letter-spacing:-0.210px;">3-2</span>
<div style="left:349.21px;top:358.30px;width:47.61px;height:18.40px;background:#fbfbfb;border-radius:2.5px;"></div>
<span style="left:367.61px;top:360.80px;font-size:10px;line-height:15px;color:#333;font-weight:700;letter-spacing:0.3px;">50</span>
<div style="left:349.21px;top:382.30px;width:47.61px;height:18.40px;background:#fbfbfb;border-radius:2.5px;"></div>
<span style="left:367.61px;top:384.80px;font-size:10px;line-height:15px;color:#333;font-weight:700;letter-spacing:0.3px;">21</span>
<span style="left:417.63px;top:342.60px;font-size:10.4px;line-height:16px;color:#999;letter-spacing:-0.210px;">4-0</span>
<div style="left:401.13px;top:358.30px;width:47.61px;height:18.40px;background:#fbfbfb;border-radius:2.5px;"></div>
<span style="left:416.74px;top:360.80px;font-size:10px;line-height:15px;color:#333;font-weight:700;letter-spacing:0.3px;">238</span>
<div style="left:401.13px;top:382.30px;width:47.61px;height:18.40px;background:#fbfbfb;border-radius:2.5px;"></div>
<span style="left:419.52px;top:384.80px;font-size:10px;line-height:15px;color:#333;font-weight:700;letter-spacing:0.3px;">18</span>
<span style="left:469.54px;top:342.60px;font-size:10.4px;line-height:16px;color:#999;letter-spacing:-0.210px;">4-1</span>
<div style="left:453.04px;top:358.30px;width:47.61px;height:18.40px;background:#fbfbfb;border-radius:2.5px;"></div>
<span style="left:468.65px;top:360.80px;font-size:10px;line-height:15px;color:#333;font-weight:700;letter-spacing:0.3px;">230</span>
<div style="left:453.04px;top:382.30px;width:47.61px;height:18.40px;background:#fbfbfb;border-radius:2.5px;"></div>
<span style="left:471.43px;top:384.80px;font-size:10px;line-height:15px;color:#333;font-weight:700;letter-spacing:0.3px;">18</span>
<span style="left:521.45px;top:342.60px;font-size:10.4px;line-height:16px;color:#999;letter-spacing:-0.210px;">4-2</span>
<div style="left:504.95px;top:358.30px;width:47.61px;height:18.40px;background:#fbfbfb;border-radius:2.5px;"></div>
<span style="left:520.56px;top:360.80px;font-size:10px;line-height:15px;color:#333;font-weight:700;letter-spacing:0.3px;">212</span>
<div style="left:504.95px;top:382.30px;width:47.61px;height:18.40px;background:#fbfbfb;border-radius:2.5px;"></div>
<span style="left:523.34px;top:384.80px;font-size:10px;line-height:15px;color:#333;font-weight:700;letter-spacing:0.3px;">38</span>
<span style="left:573.36px;top:342.60px;font-size:10.4px;line-height:16px;color:#999;letter-spacing:-0.210px;">4-3</span>
<div style="left:556.86px;top:358.30px;width:47.61px;height:18.40px;background:#fbfbfb;border-radius:2.5px;"></div>
<span style="left:572.48px;top:360.80px;font-size:10px;line-height:15px;color:#333;font-weight:700;letter-spacing:0.3px;">238</span>
<div style="left:556.86px;top:382.30px;width:47.61px;height:18.40px;background:#fbfbfb;border-radius:2.5px;"></div>
<span style="left:572.75px;top:384.80px;font-size:10px;line-height:15px;color:#333;font-weight:700;letter-spacing:0.3px;">118</span>
<span style="left:625.28px;top:342.60px;font-size:10.4px;line-height:16px;color:#999;letter-spacing:-0.210px;">0-0</span>
<div style="left:608.78px;top:370.00px;width:47.61px;height:19.30px;background:#fbfbfb;border-radius:2.5px;"></div>
<span style="left:627.17px;top:372.45px;font-size:10px;line-height:15px;color:#333;font-weight:700;letter-spacing:0.3px;">19</span>
<span style="left:677.19px;top:342.60px;font-size:10.4px;line-height:16px;color:#999;letter-spacing:-0.210px;">1-1</span>
<div style="left:660.69px;top:370.00px;width:47.61px;height:19.30px;background:#fbfbfb;border-radius:2.5px;"></div>
<span style="left:677.69px;top:372.45px;font-size:10px;line-height:15px;color:#333;font-weight:700;letter-spacing:0.3px;">9.2</span>
<span style="left:729.10px;top:342.60px;font-size:10.4px;line-height:16px;color:#999;letter-spacing:-0.210px;">2-2</span>
<div style="left:712.60px;top:370.00px;width:47.61px;height:19.30px;background:#fbfbfb;border-radius:2.5px;"></div>
<span style="left:730.99px;top:372.45px;font-size:10px;line-height:15px;color:#333;font-weight:700;letter-spacing:0.3px;">17</span>
<span style="left:781.01px;top:342.60px;font-size:10.4px;line-height:16px;color:#999;letter-spacing:-0.210px;">3-3</span>
<div style="left:764.51px;top:370.00px;width:47.61px;height:19.30px;background:#fbfbfb;border-radius:2.5px;"></div>
<span style="left:782.91px;top:372.45px;font-size:10px;line-height:15px;color:#333;font-weight:700;letter-spacing:0.3px;">65</span>
<span style="left:832.93px;top:342.60px;font-size:10.4px;line-height:16px;color:#999;letter-spacing:-0.210px;">4-4</span>
<div style="left:816.43px;top:370.00px;width:47.61px;height:19.30px;background:#fbfbfb;border-radius:2.5px;"></div>
<span style="left:832.04px;top:372.45px;font-size:10px;line-height:15px;color:#333;font-weight:700;letter-spacing:0.3px;">270</span>
<span style="left:881.48px;top:342.60px;font-size:10.4px;line-height:16px;color:#999;letter-spacing:-0.312px;transform:scaleX(0.8814);transform-origin:10.66px center;">AOS</span>
<div style="left:868.34px;top:370.00px;width:47.61px;height:19.30px;background:#fbfbfb;border-radius:2.5px;"></div>
<span style="left:885.34px;top:372.45px;font-size:10px;line-height:15px;color:#333;font-weight:700;letter-spacing:0.3px;">9.6</span>
<div style="left:85.40px;top:412.80px;width:835.60px;height:80.60px;background:#f5f5f5;border-radius:3px;border:1px solid #e9e9e9;"></div>
<svg style="left:93.40px;top:423.90px;" width="8.4" height="4.8" viewBox="0 0 8.4 4.8"><path d="M0.5 0.5 L4.2 4.3 L7.9 0.5" fill="none" stroke="#333" stroke-width="1.2" stroke-linecap="round" stroke-linejoin="round"/></svg>
<span style="left:112.00px;top:418.80px;font-size:10.3px;line-height:15px;color:#444;letter-spacing:-0.309px;transform:scaleX(0.9569);transform-origin:left center;">Tỷ Số Chính Xác Hiệp 1</span>
<div style="left:89.60px;top:433.90px;width:826.00px;height:1.00px;background:#e6e6e6;"></div>
<span style="left:117.95px;top:436.10px;font-size:10.4px;line-height:16px;color:#999;letter-spacing:-0.210px;">1-0</span>
<div style="left:89.65px;top:451.50px;width:71.21px;height:16.40px;background:#fbfbfb;border-radius:2.5px;"></div>
<span style="left:118.45px;top:453.00px;font-size:10px;line-height:15px;color:#333;font-weight:700;letter-spacing:0.3px;">8.5</span>
<div style="left:89.65px;top:472.40px;width:71.21px;height:16.60px;background:#fbfbfb;border-radius:2.5px;"></div>
<span style="left:118.45px;top:474.00px;font-size:10px;line-height:15px;color:#333;font-weight:700;letter-spacing:0.3px;">3.1</span>
<span style="left:193.46px;top:436.10px;font-size:10.4px;line-height:16px;color:#999;letter-spacing:-0.210px;">2-0</span>
<div style="left:165.16px;top:451.50px;width:71.21px;height:16.40px;background:#fbfbfb;border-radius:2.5px;"></div>
<span style="left:195.35px;top:453.00px;font-size:10px;line-height:15px;color:#333;font-weight:700;letter-spacing:0.3px;">42</span>
<div style="left:165.16px;top:472.40px;width:71.21px;height:16.60px;background:#fbfbfb;border-radius:2.5px;"></div>
<span style="left:193.96px;top:474.00px;font-size:10px;line-height:15px;color:#333;font-weight:700;letter-spacing:0.3px;">6.2</span>
<span style="left:268.97px;top:436.10px;font-size:10.4px;line-height:16px;color:#999;letter-spacing:-0.210px;">2-1</span>
<div style="left:240.67px;top:451.50px;width:71.21px;height:16.40px;background:#fbfbfb;border-radius:2.5px;"></div>
<span style="left:270.86px;top:453.00px;font-size:10px;line-height:15px;color:#333;font-weight:700;letter-spacing:0.3px;">42</span>
<div style="left:240.67px;top:472.40px;width:71.21px;height:16.60px;background:#fbfbfb;border-radius:2.5px;"></div>
<span style="left:270.86px;top:474.00px;font-size:10px;line-height:15px;color:#333;font-weight:700;letter-spacing:0.3px;">16</span>
<span style="left:344.48px;top:436.10px;font-size:10.4px;line-height:16px;color:#999;letter-spacing:-0.210px;">3-0</span>
<div style="left:316.18px;top:451.50px;width:71.21px;height:16.40px;background:#fbfbfb;border-radius:2.5px;"></div>
<span style="left:343.59px;top:453.00px;font-size:10px;line-height:15px;color:#333;font-weight:700;letter-spacing:0.3px;">188</span>
<div style="left:316.18px;top:472.40px;width:71.21px;height:16.60px;background:#fbfbfb;border-radius:2.5px;"></div>
<span style="left:346.37px;top:474.00px;font-size:10px;line-height:15px;color:#333;font-weight:700;letter-spacing:0.3px;">18</span>
<span style="left:419.99px;top:436.10px;font-size:10.4px;line-height:16px;color:#999;letter-spacing:-0.210px;">3-1</span>
<div style="left:391.69px;top:451.50px;width:71.21px;height:16.40px;background:#fbfbfb;border-radius:2.5px;"></div>
<span style="left:419.10px;top:453.00px;font-size:10px;line-height:15px;color:#333;font-weight:700;letter-spacing:0.3px;">188</span>
<div style="left:391.69px;top:472.40px;width:71.21px;height:16.60px;background:#fbfbfb;border-radius:2.5px;"></div>
<span style="left:421.88px;top:474.00px;font-size:10px;line-height:15px;color:#333;font-weight:700;letter-spacing:0.3px;">47</span>
<span style="left:495.49px;top:436.10px;font-size:10.4px;line-height:16px;color:#999;letter-spacing:-0.210px;">3-2</span>
<div style="left:467.20px;top:451.50px;width:71.21px;height:16.40px;background:#fbfbfb;border-radius:2.5px;"></div>
<span style="left:494.61px;top:453.00px;font-size:10px;line-height:15px;color:#333;font-weight:700;letter-spacing:0.3px;">188</span>
<div style="left:467.20px;top:472.40px;width:71.21px;height:16.60px;background:#fbfbfb;border-radius:2.5px;"></div>
<span style="left:494.61px;top:474.00px;font-size:10px;line-height:15px;color:#333;font-weight:700;letter-spacing:0.3px;">180</span>
<span style="left:571.00px;top:436.10px;font-size:10.4px;line-height:16px;color:#999;letter-spacing:-0.210px;">0-0</span>
<div style="left:542.70px;top:462.00px;width:71.21px;height:16.50px;background:#fbfbfb;border-radius:2.5px;"></div>
<span style="left:571.51px;top:463.05px;font-size:10px;line-height:15px;color:#333;font-weight:700;letter-spacing:0.3px;">3.1</span>
<span style="left:646.51px;top:436.10px;font-size:10.4px;line-height:16px;color:#999;letter-spacing:-0.210px;">1-1</span>
<div style="left:618.21px;top:462.00px;width:71.21px;height:16.50px;background:#fbfbfb;border-radius:2.5px;"></div>
<span style="left:647.02px;top:463.05px;font-size:10px;line-height:15px;color:#333;font-weight:700;letter-spacing:0.3px;">7.7</span>
<span style="left:722.02px;top:436.10px;font-size:10.4px;line-height:16px;color:#999;letter-spacing:-0.210px;">2-2</span>
<div style="left:693.72px;top:462.00px;width:71.21px;height:16.50px;background:#fbfbfb;border-radius:2.5px;"></div>
<span style="left:723.91px;top:463.05px;font-size:10px;line-height:15px;color:#333;font-weight:700;letter-spacing:0.3px;">72</span>
<span style="left:797.53px;top:436.10px;font-size:10.4px;line-height:16px;color:#999;letter-spacing:-0.210px;">3-3</span>
<div style="left:769.23px;top:462.00px;width:71.21px;height:16.50px;background:#fbfbfb;border-radius:2.5px;"></div>
<span style="left:796.64px;top:463.05px;font-size:10px;line-height:15px;color:#333;font-weight:700;letter-spacing:0.3px;">250</span>
<span style="left:869.68px;top:436.10px;font-size:10.4px;line-height:16px;color:#999;letter-spacing:-0.312px;transform:scaleX(0.8814);transform-origin:10.66px center;">AOS</span>
<div style="left:844.74px;top:462.00px;width:71.21px;height:16.50px;background:#fbfbfb;border-radius:2.5px;"></div>
<span style="left:874.93px;top:463.05px;font-size:10px;line-height:15px;color:#333;font-weight:700;letter-spacing:0.3px;">38</span>
<div style="left:85.40px;top:500.40px;width:835.60px;height:89.60px;background:#f5f5f5;border-radius:3px;border:1px solid #e9e9e9;"></div>
<svg style="left:93.40px;top:512.00px;" width="8.4" height="4.8" viewBox="0 0 8.4 4.8"><path d="M0.5 0.5 L4.2 4.3 L7.9 0.5" fill="none" stroke="#333" stroke-width="1.2" stroke-linecap="round" stroke-linejoin="round"/></svg>
<span style="left:112.00px;top:506.90px;font-size:10.3px;line-height:15px;color:#444;letter-spacing:-0.309px;transform:scaleX(0.9569);transform-origin:left center;">Tỷ Số Chính Xác Hiệp 2</span>
<div style="left:89.60px;top:522.30px;width:826.00px;height:1.00px;background:#e6e6e6;"></div>
<span style="left:117.95px;top:523.40px;font-size:10.4px;line-height:16px;color:#999;letter-spacing:-0.210px;">1-0</span>
<div style="left:89.65px;top:538.80px;width:71.21px;height:16.60px;background:#fbfbfb;border-radius:2.5px;"></div>
<span style="left:118.45px;top:539.70px;font-size:10px;line-height:15px;color:#333;font-weight:700;letter-spacing:0.3px;">8.5</span>
<div style="left:89.65px;top:560.00px;width:71.21px;height:16.60px;background:#fbfbfb;border-radius:2.5px;"></div>
<span style="left:115.67px;top:560.90px;font-size:10px;line-height:15px;color:#333;font-weight:700;letter-spacing:0.3px;">3.75</span>
<span style="left:193.46px;top:523.40px;font-size:10.4px;line-height:16px;color:#999;letter-spacing:-0.210px;">2-0</span>
<div style="left:165.16px;top:538.80px;width:71.21px;height:16.60px;background:#fbfbfb;border-radius:2.5px;"></div>
<span style="left:195.35px;top:539.70px;font-size:10px;line-height:15px;color:#333;font-weight:700;letter-spacing:0.3px;">29</span>
<div style="left:165.16px;top:560.00px;width:71.21px;height:16.60px;background:#fbfbfb;border-radius:2.5px;"></div>
<span style="left:193.96px;top:560.90px;font-size:10px;line-height:15px;color:#333;font-weight:700;letter-spacing:0.3px;">6.2</span>
<span style="left:268.97px;top:523.40px;font-size:10.4px;line-height:16px;color:#999;letter-spacing:-0.210px;">2-1</span>
<div style="left:240.67px;top:538.80px;width:71.21px;height:16.60px;background:#fbfbfb;border-radius:2.5px;"></div>
<span style="left:270.86px;top:539.70px;font-size:10px;line-height:15px;color:#333;font-weight:700;letter-spacing:0.3px;">24</span>
<div style="left:240.67px;top:560.00px;width:71.21px;height:16.60px;background:#fbfbfb;border-radius:2.5px;"></div>
<span style="left:271.13px;top:560.90px;font-size:10px;line-height:15px;color:#333;font-weight:700;letter-spacing:0.3px;">11</span>
<span style="left:344.48px;top:523.40px;font-size:10.4px;line-height:16px;color:#999;letter-spacing:-0.210px;">3-0</span>
<div style="left:316.18px;top:538.80px;width:71.21px;height:16.60px;background:#fbfbfb;border-radius:2.5px;"></div>
<span style="left:343.59px;top:539.70px;font-size:10px;line-height:15px;color:#333;font-weight:700;letter-spacing:0.3px;">156</span>
<div style="left:316.18px;top:560.00px;width:71.21px;height:16.60px;background:#fbfbfb;border-radius:2.5px;"></div>
<span style="left:346.37px;top:560.90px;font-size:10px;line-height:15px;color:#333;font-weight:700;letter-spacing:0.3px;">15</span>
<span style="left:419.99px;top:523.40px;font-size:10.4px;line-height:16px;color:#999;letter-spacing:-0.210px;">3-1</span>
<div style="left:391.69px;top:538.80px;width:71.21px;height:16.60px;background:#fbfbfb;border-radius:2.5px;"></div>
<span style="left:419.10px;top:539.70px;font-size:10px;line-height:15px;color:#333;font-weight:700;letter-spacing:0.3px;">124</span>
<div style="left:391.69px;top:560.00px;width:71.21px;height:16.60px;background:#fbfbfb;border-radius:2.5px;"></div>
<span style="left:421.88px;top:560.90px;font-size:10px;line-height:15px;color:#333;font-weight:700;letter-spacing:0.3px;">25</span>
<span style="left:495.49px;top:523.40px;font-size:10.4px;line-height:16px;color:#999;letter-spacing:-0.210px;">3-2</span>
<div style="left:467.20px;top:538.80px;width:71.21px;height:16.60px;background:#fbfbfb;border-radius:2.5px;"></div>
<span style="left:494.61px;top:539.70px;font-size:10px;line-height:15px;color:#333;font-weight:700;letter-spacing:0.3px;">180</span>
<div style="left:467.20px;top:560.00px;width:71.21px;height:16.60px;background:#fbfbfb;border-radius:2.5px;"></div>
<span style="left:497.39px;top:560.90px;font-size:10px;line-height:15px;color:#333;font-weight:700;letter-spacing:0.3px;">91</span>
<span style="left:571.00px;top:523.40px;font-size:10.4px;line-height:16px;color:#999;letter-spacing:-0.210px;">0-0</span>
<div style="left:542.70px;top:549.40px;width:71.21px;height:16.60px;background:#fbfbfb;border-radius:2.5px;"></div>
<span style="left:571.51px;top:549.80px;font-size:10px;line-height:15px;color:#333;font-weight:700;letter-spacing:0.3px;">3.5</span>
<span style="left:646.51px;top:523.40px;font-size:10.4px;line-height:16px;color:#999;letter-spacing:-0.210px;">1-1</span>
<div style="left:618.21px;top:549.40px;width:71.21px;height:16.60px;background:#fbfbfb;border-radius:2.5px;"></div>
<span style="left:647.02px;top:549.80px;font-size:10px;line-height:15px;color:#333;font-weight:700;letter-spacing:0.3px;">6.5</span>
<span style="left:722.02px;top:523.40px;font-size:10.4px;line-height:16px;color:#999;letter-spacing:-0.210px;">2-2</span>
<div style="left:693.72px;top:549.40px;width:71.21px;height:16.60px;background:#fbfbfb;border-radius:2.5px;"></div>
<span style="left:723.91px;top:549.80px;font-size:10px;line-height:15px;color:#333;font-weight:700;letter-spacing:0.3px;">33</span>
<span style="left:797.53px;top:523.40px;font-size:10.4px;line-height:16px;color:#999;letter-spacing:-0.210px;">3-3</span>
<div style="left:769.23px;top:549.40px;width:71.21px;height:16.60px;background:#fbfbfb;border-radius:2.5px;"></div>
<span style="left:796.64px;top:549.80px;font-size:10px;line-height:15px;color:#333;font-weight:700;letter-spacing:0.3px;">180</span>
<span style="left:869.68px;top:523.40px;font-size:10.4px;line-height:16px;color:#999;letter-spacing:-0.312px;transform:scaleX(0.8814);transform-origin:10.66px center;">AOS</span>
<div style="left:844.74px;top:549.40px;width:71.21px;height:16.60px;background:#fbfbfb;border-radius:2.5px;"></div>
<span style="left:874.93px;top:549.80px;font-size:10px;line-height:15px;color:#333;font-weight:700;letter-spacing:0.3px;">19</span>
<div style="left:933.40px;top:110.60px;width:100.00px;height:90.20px;background:#fff;border-radius:3px;"></div>
<div style="left:936.20px;top:113.50px;width:90.00px;height:37.60px;background:radial-gradient(ellipse 70px 34px at 62% 8%,#f63c4b 0%,#e42c3a 45%,#c8202c 100%);border-radius:2px 0 0 2px;"></div>
<svg style="left:937.60px;top:123.60px;" width="18.4" height="18.8" viewBox="0 0 18.4 18.8"><circle cx="9.2" cy="9.4" r="8.6" fill="#f6d9db" stroke="#fbeced" stroke-width="0.8"/><path d="M1.2 12 Q6 9.5 11 12.5 T17.4 11" fill="none" stroke="#d6414b" stroke-width="0.9"/><path d="M2.4 14.6 Q7 12 12 15 T16.4 14" fill="none" stroke="#d6414b" stroke-width="0.8"/><path d="M2 5 Q4 8 2.2 10.4" fill="none" stroke="#d6414b" stroke-width="0.7"/><path d="M16.2 4.6 Q14.4 7.6 16.6 10" fill="none" stroke="#d6414b" stroke-width="0.7"/><text x="9.2" y="7.2" text-anchor="middle" font-family="Liberation Sans, sans-serif" font-weight="700" font-size="5.6" fill="#c92f3a">SA</text><text x="9.2" y="12.2" text-anchor="middle" font-family="Liberation Sans, sans-serif" font-weight="700" font-size="5.6" fill="#c92f3a">BA</text></svg>
<span style="left:957.20px;top:120.30px;font-size:8.0px;line-height:12px;color:#fff;font-weight:700;letter-spacing:-0.240px;transform:scaleX(0.9904);transform-origin:left center;-webkit-text-stroke:0.2px #fff;">Xem tin tức thể thao</span>
<span style="left:957.50px;top:126.60px;font-size:15.2px;line-height:22px;color:#fff;font-weight:700;letter-spacing:-0.456px;transform:scaleX(0.9218);transform-origin:left center;">mới nhất</span>
<div style="left:936.20px;top:155.60px;width:90.00px;height:37.40px;background:linear-gradient(90deg,#6e0a0e 0%,#8e1016 25%,#b0161e 55%,#c41c26 100%);border-radius:2px 0 0 2px;overflow:hidden;"><svg style="left:0;top:0" width="90" height="38" viewBox="0 0 90 38"><g transform="rotate(-24 42 14)"><rect x="36" y="1" width="12" height="17" rx="1" fill="#f4f4f4" stroke="#d0c8c8" stroke-width="0.4"/><path d="M42 7 L44 10 L42 13 L40 10 Z" fill="#d8242e"/></g><g transform="rotate(-38 40 20)"><rect x="33" y="12" width="11" height="15" rx="1" fill="#efefef" stroke="#d0c8c8" stroke-width="0.4"/><path d="M38.5 17 L40.2 19.6 L38.5 22 L36.8 19.6 Z" fill="#d8242e"/></g><g transform="rotate(8 55 8)"><rect x="49" y="-4" width="12" height="17" rx="1" fill="#f6f2f2" stroke="#d0c8c8" stroke-width="0.4"/><circle cx="53.6" cy="7" r="1.3" fill="#1c1c1c"/><circle cx="56.2" cy="7" r="1.3" fill="#1c1c1c"/><circle cx="54.9" cy="5" r="1.3" fill="#1c1c1c"/></g><ellipse cx="50" cy="37.5" rx="5" ry="2.6" fill="#f2d028"/><ellipse cx="70" cy="37" rx="4.6" ry="3.4" fill="#f4ecec"/><ellipse cx="80" cy="37.6" rx="6" ry="2.8" fill="#f0cc24"/><ellipse cx="84" cy="-0.5" rx="5" ry="2.2" fill="#f0a0c0"/><circle cx="19.9" cy="14.6" r="11.4" fill="none" stroke="#e8a324" stroke-width="3.2"/><circle cx="19.9" cy="14.6" r="12.6" fill="none" stroke="#f6d67a" stroke-width="0.6"/><circle cx="19.9" cy="14.6" r="9" fill="none" stroke="#b86e12" stroke-width="0.8"/><circle cx="19.9" cy="14.6" r="7.6" fill="#8e1216" stroke="#f2c24a" stroke-width="1.1"/><path d="M15.8 11 L19.9 18.6 L24 11" fill="none" stroke="#f6d054" stroke-width="1.9" stroke-linecap="round" stroke-linejoin="round"/></svg><div style="left:0;top:22.4px;width:44px;height:15px;background:linear-gradient(90deg,#7c0c10 0%,#8e1116 70%,rgba(150,18,24,0) 100%);"></div><div style="left:0;top:22.2px;width:38px;height:0.7px;background:linear-gradient(90deg,#c0484c,rgba(192,72,76,0));"></div></div>
<span style="left:940.20px;top:179.20px;font-size:8.6px;line-height:13px;color:#f0e4e4;letter-spacing:-0.258px;transform:scaleX(0.9823);transform-origin:left center;">Vgaming</span>
<span style="left:980.50px;top:161.60px;font-size:11px;line-height:16px;color:#ffe61e;font-weight:700;font-style:italic;letter-spacing:-0.330px;transform:scaleX(0.8973);transform-origin:left center;text-shadow:0 1.2px 0 #9a2c04,0 0 1.5px #8a2404,1px 1px 1px #7a1c02;-webkit-text-stroke:0.5px #ffe61e;">CỔNG GAME</span>
<span style="left:979.40px;top:172.90px;font-size:10.5px;line-height:16px;color:#ffe61e;font-weight:700;font-style:italic;letter-spacing:-0.315px;transform:scaleX(0.9483);transform-origin:left center;text-shadow:0 1.2px 0 #9a2c04,0 0 1.5px #8a2404,1px 1px 1px #7a1c02;-webkit-text-stroke:0.5px #ffe61e;">CHO NGƯỜI</span>
<div style="left:998.50px;top:193.90px;width:5.60px;height:5.60px;background:#2f80c3;border-radius:2.8px;"></div>
<div style="left:1009.70px;top:194.10px;width:5.20px;height:5.20px;background:#d2d2d2;border-radius:2.6px;"></div>
<div style="left:1021.40px;top:194.10px;width:5.20px;height:5.20px;background:#d2d2d2;border-radius:2.6px;"></div>
<div style="left:0.00px;top:572.70px;width:1024.00px;height:3.00px;background:#fff;"></div>
<div style="left:0.00px;top:574.60px;width:1024.00px;height:1.40px;background:#5f6a70;"></div>
</div>
</body>
</html>
